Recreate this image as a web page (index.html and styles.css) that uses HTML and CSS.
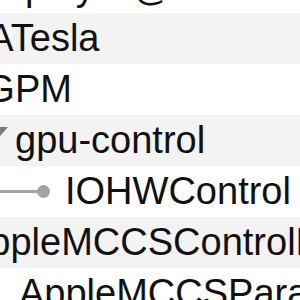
FILE: index.html
```html
<!DOCTYPE html>
<html lang="en">
<head>
  <meta charset="UTF-8" />
  <title>IORegistry</title>
  <link rel="stylesheet" href="styles.css">
</head>
<body>
  <div id="tree">
    <div class="row"><span class="name" style="margin-left:-146px">NVDA,Display-A@0</span></div>
    <div class="row alt"><span class="name" style="margin-left:-92px">NVDATesla</span></div>
    <div class="row"><span class="name" style="margin-left:-40px">AGPM</span></div>
    <div class="row alt">
      <span class="disclosure"></span>
      <span class="name branch">gpu-control</span>
    </div>
    <div class="row">
      <span class="line"></span>
      <span class="dot"></span>
      <span class="name leaf">IOHWControl</span>
    </div>
    <div class="row alt"><span class="name" style="margin-left:-36px">AppleMCCSControlModule</span></div>
    <div class="row"><span class="name" style="margin-left:19px">AppleMCCSParameterHandler</span></div>
  </div>
</body>
</html>
```

FILE: styles.css
```css
html, body {
  margin: 0;
  padding: 0;
  background: #ffffff;
  overflow: hidden;
  width: 300px;
  height: 300px;
}

#tree {
  margin-top: -38px;
  font-family: "Liberation Sans", Arial, sans-serif;
  font-size: 38px;
  color: #111;
}

.row {
  height: 51px;
  display: flex;
  align-items: center;
  white-space: nowrap;
  background: #ffffff;
}

.row.alt {
  background: #f3f3f3;
}

.name {
  line-height: 51px;
  flex-shrink: 0;
}

.disclosure {
  flex-shrink: 0;
  align-self: flex-start;
  margin-top: 12px;
  margin-left: -8px;
  width: 0;
  height: 0;
  border-left: 8px solid transparent;
  border-right: 8px solid transparent;
  border-top: 9px solid #7a7a7a;
}

.branch {
  margin-left: 7px;
}

.line {
  flex-shrink: 0;
  width: 40px;
  height: 3px;
  background: #a3a3a3;
}

.dot {
  flex-shrink: 0;
  width: 13px;
  height: 13px;
  margin-left: -3px;
  border-radius: 50%;
  background: #a3a3a3;
}

.leaf {
  margin-left: 15px;
}
```
